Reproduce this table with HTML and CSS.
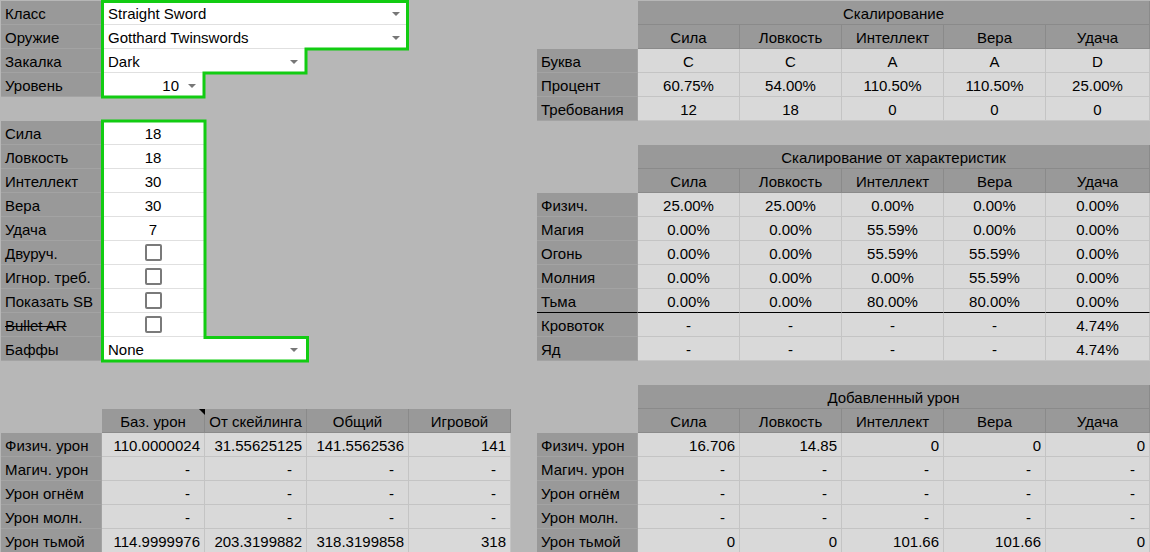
FILE: index.html
```html
<!DOCTYPE html>
<html lang="ru">
<head>
    <meta charset="UTF-8">
    <meta name="viewport" content="width=device-width, initial-scale=1.0">
    <title>Калькулятор урона</title>
    <link rel="stylesheet" href="styles.css">
</head>
<body>

<div class="sheet">
    <div class="side left">
        <div class="block weapon">
            <div class="cell lbl">Класс</div>
            <div class="cell input pick span3">Straight Sword<i class="arrow"></i></div>
            <div class="cell lbl">Оружие</div>
            <div class="cell input pick span3">Gotthard Twinswords<i class="arrow"></i></div>
            <div class="cell lbl">Закалка</div>
            <div class="cell input pick span2">Dark<i class="arrow"></i></div>
            <div class="cell lbl">Уровень</div>
            <div class="cell input pick level">10<i class="arrow"></i></div>
            <svg class="outline"><polygon points="101.5,0.5 406.5,0.5 406.5,48 305,48 305,72 203,72 203,96 101.5,96"/></svg>
        </div>

        <div class="block stats gap1">
            <div class="cell lbl">Сила</div>
            <div class="cell input mid">18</div>
            <div class="cell lbl">Ловкость</div>
            <div class="cell input mid">18</div>
            <div class="cell lbl">Интеллект</div>
            <div class="cell input mid">30</div>
            <div class="cell lbl">Вера</div>
            <div class="cell input mid">30</div>
            <div class="cell lbl">Удача</div>
            <div class="cell input mid">7</div>
            <div class="cell lbl">Двуруч.</div>
            <div class="cell input mid"><span class="check"></span></div>
            <div class="cell lbl">Игнор. треб.</div>
            <div class="cell input mid"><span class="check"></span></div>
            <div class="cell lbl">Показать SB</div>
            <div class="cell input mid"><span class="check"></span></div>
            <div class="cell lbl"><s>Bullet AR</s></div>
            <div class="cell input mid"><span class="check"></span></div>
            <div class="cell lbl">Баффы</div>
            <div class="cell input pick span2">None<i class="arrow"></i></div>
            <svg class="outline"><polygon points="101.5,0 204,0 204,216.5 306.5,216.5 306.5,240 101.5,240"/></svg>
        </div>

        <div class="block damage gap2">
            <div class="cell corner"></div>
            <div class="cell hd note">Баз. урон</div>
            <div class="cell hd">От скейлинга</div>
            <div class="cell hd">Общий</div>
            <div class="cell hd">Игровой</div>

            <div class="cell lbl">Физич. урон</div>
            <div class="cell val num">110.0000024</div>
            <div class="cell val num">31.55625125</div>
            <div class="cell val num">141.5562536</div>
            <div class="cell val num">141</div>

            <div class="cell lbl">Магич. урон</div>
            <div class="cell val num dash">-</div>
            <div class="cell val num dash">-</div>
            <div class="cell val num dash">-</div>
            <div class="cell val num dash">-</div>

            <div class="cell lbl">Урон огнём</div>
            <div class="cell val num dash">-</div>
            <div class="cell val num dash">-</div>
            <div class="cell val num dash">-</div>
            <div class="cell val num dash">-</div>

            <div class="cell lbl">Урон молн.</div>
            <div class="cell val num dash">-</div>
            <div class="cell val num dash">-</div>
            <div class="cell val num dash">-</div>
            <div class="cell val num dash">-</div>

            <div class="cell lbl">Урон тьмой</div>
            <div class="cell val num">114.9999976</div>
            <div class="cell val num">203.3199882</div>
            <div class="cell val num">318.3199858</div>
            <div class="cell val num">318</div>
        </div>
    </div>

    <div class="side right">
        <div class="block table">
            <div class="cell corner"></div>
            <div class="cell hd span5">Скалирование</div>
            <div class="cell corner"></div>
            <div class="cell hd">Сила</div>
            <div class="cell hd">Ловкость</div>
            <div class="cell hd">Интеллект</div>
            <div class="cell hd">Вера</div>
            <div class="cell hd">Удача</div>

            <div class="cell lbl">Буква</div>
            <div class="cell val">C</div>
            <div class="cell val">C</div>
            <div class="cell val">A</div>
            <div class="cell val">A</div>
            <div class="cell val">D</div>

            <div class="cell lbl">Процент</div>
            <div class="cell val">60.75%</div>
            <div class="cell val">54.00%</div>
            <div class="cell val">110.50%</div>
            <div class="cell val">110.50%</div>
            <div class="cell val">25.00%</div>

            <div class="cell lbl">Требования</div>
            <div class="cell val">12</div>
            <div class="cell val">18</div>
            <div class="cell val">0</div>
            <div class="cell val">0</div>
            <div class="cell val">0</div>
        </div>

        <div class="block table gap1">
            <div class="cell corner"></div>
            <div class="cell hd span5">Скалирование от характеристик</div>
            <div class="cell corner"></div>
            <div class="cell hd">Сила</div>
            <div class="cell hd">Ловкость</div>
            <div class="cell hd">Интеллект</div>
            <div class="cell hd">Вера</div>
            <div class="cell hd">Удача</div>

            <div class="cell lbl">Физич.</div>
            <div class="cell val">25.00%</div>
            <div class="cell val">25.00%</div>
            <div class="cell val">0.00%</div>
            <div class="cell val">0.00%</div>
            <div class="cell val">0.00%</div>

            <div class="cell lbl">Магия</div>
            <div class="cell val">0.00%</div>
            <div class="cell val">0.00%</div>
            <div class="cell val">55.59%</div>
            <div class="cell val">0.00%</div>
            <div class="cell val">0.00%</div>

            <div class="cell lbl">Огонь</div>
            <div class="cell val">0.00%</div>
            <div class="cell val">0.00%</div>
            <div class="cell val">55.59%</div>
            <div class="cell val">55.59%</div>
            <div class="cell val">0.00%</div>

            <div class="cell lbl">Молния</div>
            <div class="cell val">0.00%</div>
            <div class="cell val">0.00%</div>
            <div class="cell val">0.00%</div>
            <div class="cell val">55.59%</div>
            <div class="cell val">0.00%</div>

            <div class="cell lbl line">Тьма</div>
            <div class="cell val line">0.00%</div>
            <div class="cell val line">0.00%</div>
            <div class="cell val line">80.00%</div>
            <div class="cell val line">80.00%</div>
            <div class="cell val line">0.00%</div>

            <div class="cell lbl">Кровоток</div>
            <div class="cell val">-</div>
            <div class="cell val">-</div>
            <div class="cell val">-</div>
            <div class="cell val">-</div>
            <div class="cell val">4.74%</div>

            <div class="cell lbl">Яд</div>
            <div class="cell val">-</div>
            <div class="cell val">-</div>
            <div class="cell val">-</div>
            <div class="cell val">-</div>
            <div class="cell val">4.74%</div>
        </div>

        <div class="block table gap1">
            <div class="cell corner"></div>
            <div class="cell hd span5">Добавленный урон</div>
            <div class="cell corner"></div>
            <div class="cell hd">Сила</div>
            <div class="cell hd">Ловкость</div>
            <div class="cell hd">Интеллект</div>
            <div class="cell hd">Вера</div>
            <div class="cell hd">Удача</div>

            <div class="cell lbl">Физич. урон</div>
            <div class="cell val num">16.706</div>
            <div class="cell val num">14.85</div>
            <div class="cell val num">0</div>
            <div class="cell val num">0</div>
            <div class="cell val num">0</div>

            <div class="cell lbl">Магич. урон</div>
            <div class="cell val num dash">-</div>
            <div class="cell val num dash">-</div>
            <div class="cell val num dash">-</div>
            <div class="cell val num dash">-</div>
            <div class="cell val num dash">-</div>

            <div class="cell lbl">Урон огнём</div>
            <div class="cell val num dash">-</div>
            <div class="cell val num dash">-</div>
            <div class="cell val num dash">-</div>
            <div class="cell val num dash">-</div>
            <div class="cell val num dash">-</div>

            <div class="cell lbl">Урон молн.</div>
            <div class="cell val num dash">-</div>
            <div class="cell val num dash">-</div>
            <div class="cell val num dash">-</div>
            <div class="cell val num dash">-</div>
            <div class="cell val num dash">-</div>

            <div class="cell lbl">Урон тьмой</div>
            <div class="cell val num">0</div>
            <div class="cell val num">0</div>
            <div class="cell val num">101.66</div>
            <div class="cell val num">101.66</div>
            <div class="cell val num">0</div>
        </div>
    </div>
</div>

</body>
</html>
```

FILE: styles.css
```css
body {
    margin: 0;
    background-color: #b7b7b7;
    font-family: "Liberation Sans", Arial, sans-serif;
    font-size: 15px;
    color: #000;
    overflow: hidden;
}
.sheet {
    display: flex;
    gap: 26px;
    padding: 1px 0 0 1px;
}
.side {
    display: flex;
    flex-direction: column;
}
.block {
    position: relative;
    display: grid;
    grid-auto-rows: 24px;
}
.left .block {
    grid-template-columns: 101px 103px 102px 102px 102px;
}
.right .block {
    grid-template-columns: 101px 102px 102px 102px 102px 104px;
}
.gap1 {
    margin-top: 24px;
}
.gap2 {
    margin-top: 48px;
}
.cell {
    box-sizing: border-box;
    display: flex;
    align-items: center;
    padding: 2px 4px 0;
    white-space: nowrap;
    overflow: hidden;
    border-right: 1px solid transparent;
    border-bottom: 1px solid transparent;
}
.lbl,
.corner {
    grid-column: 1;
}
.lbl {
    background-color: #999999;
    border-color: #a3a3a3;
}
.hd {
    position: relative;
    justify-content: center;
    background-color: #999999;
    border-color: #8a8a8a;
    overflow: visible;
}
.val {
    justify-content: center;
    background-color: #d9d9d9;
    border-color: #c4c4c4;
}
.val.num {
    justify-content: flex-end;
}
.val.dash {
    padding-right: 14px;
}
.line {
    border-bottom-color: #000;
}
.input {
    background-color: #fff;
    border-color: #e0e0e0;
}
.mid {
    justify-content: center;
}
.span2 {
    grid-column: span 2;
}
.span3 {
    grid-column: span 3;
}
.span5 {
    grid-column: span 5;
}
.pick {
    padding: 2px 8px 0 6px;
}
.arrow {
    margin-left: auto;
    width: 0;
    height: 0;
    border-left: 4px solid transparent;
    border-right: 4px solid transparent;
    border-top: 4px solid #777;
}
.level {
    justify-content: flex-end;
}
.level .arrow {
    margin-left: 9px;
}
.check {
    box-sizing: border-box;
    width: 17px;
    height: 17px;
    margin-bottom: 2px;
    border: 2px solid #7a7a7a;
    border-radius: 2px;
    background-color: #fff;
}
.note::after {
    content: "";
    position: absolute;
    top: 0;
    right: -1px;
    border-top: 6px solid #000;
    border-left: 6px solid transparent;
}
.outline {
    position: absolute;
    left: 0;
    top: 0;
    width: 100%;
    height: 100%;
    overflow: visible;
    pointer-events: none;
}
.outline polygon {
    fill: none;
    stroke: #12cc12;
    stroke-width: 3;
}
```
